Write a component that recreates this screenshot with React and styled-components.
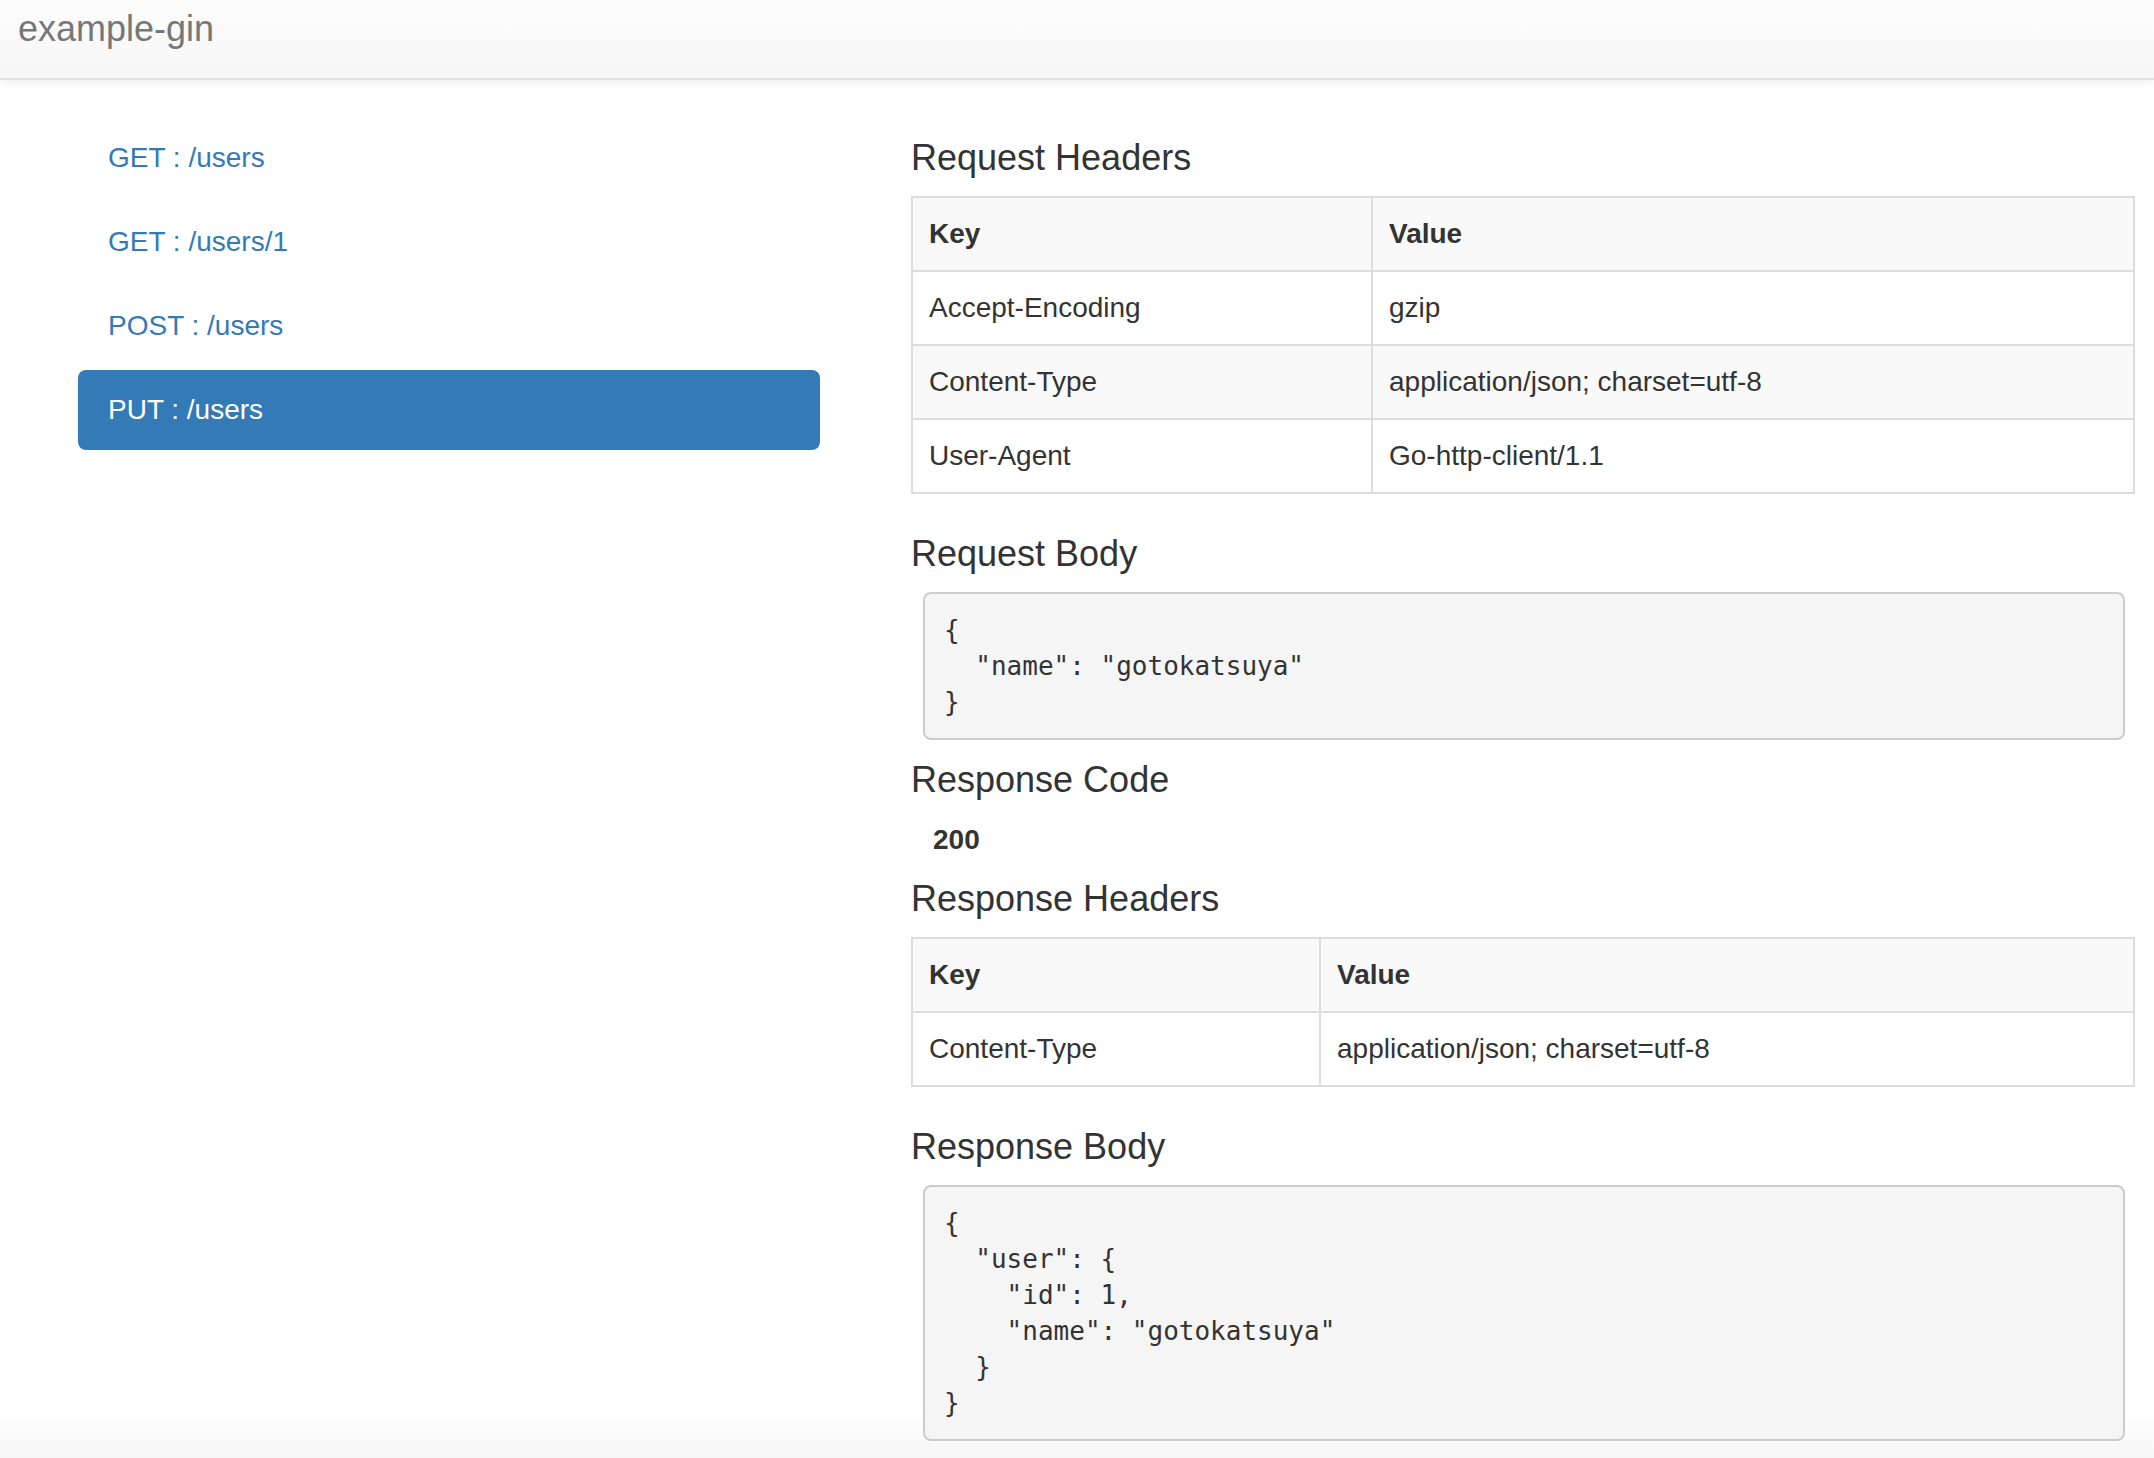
import styled, { createGlobalStyle } from "styled-components";

const endpoints = [
  { id: 1, method: "GET", path: "/users" },
  { id: 2, method: "GET", path: "/users/1" },
  { id: 3, method: "POST", path: "/users" },
  { id: 4, method: "PUT", path: "/users", active: true },
];

const requestHeaders = [
  ["Accept-Encoding", "gzip"],
  ["Content-Type", "application/json; charset=utf-8"],
  ["User-Agent", "Go-http-client/1.1"],
];

const responseHeaders = [["Content-Type", "application/json; charset=utf-8"]];

const requestBody = `{
  "name": "gotokatsuya"
}`;

const responseBody = `{
  "user": {
    "id": 1,
    "name": "gotokatsuya"
  }
}`;

const HeaderTable = ({ rows, keyWidth }) => (
  <Table>
    <tbody>
      <Row>
        <HeadCell $width={keyWidth}>Key</HeadCell>
        <HeadCell>Value</HeadCell>
      </Row>
      {rows.map(([key, value]) => (
        <Row key={key}>
          <Cell>{key}</Cell>
          <Cell>{value}</Cell>
        </Row>
      ))}
    </tbody>
  </Table>
);

const App = () => {
  return (
    <Page>
      <GlobalStyle />
      <Navbar>
        <Brand href="#">example-gin</Brand>
      </Navbar>
      <Main>
        <Sidebar>
          {endpoints.map((item) => (
            <PillLink key={item.id} href="#" $active={item.active}>
              {item.method} : {item.path}
            </PillLink>
          ))}
        </Sidebar>
        <Content>
          <Title>Request Headers</Title>
          <HeaderTable rows={requestHeaders} keyWidth={460} />
          <Title>Request Body</Title>
          <Code>{requestBody}</Code>
          <Title>Response Code</Title>
          <StatusCode>200</StatusCode>
          <Title>Response Headers</Title>
          <HeaderTable rows={responseHeaders} keyWidth={408} />
          <Title>Response Body</Title>
          <Code>{responseBody}</Code>
        </Content>
      </Main>
    </Page>
  );
};

export default App;

const GlobalStyle = createGlobalStyle`
  * {
    box-sizing: border-box;
  }

  html,
  body {
    margin: 0;
    padding: 0;
  }

  body {
    font-family: "Liberation Sans", Arial, sans-serif;
    font-size: 28px;
    line-height: 40px;
    color: #333;
    background: #fff;
  }
`;

const Page = styled.div`
  min-height: 1458px;
  background: linear-gradient(
    to bottom,
    #fff 0,
    #fff calc(100% - 52px),
    #f6f6f6 100%
  );
`;

const Navbar = styled.header`
  height: 80px;
  padding: 9px 18px 0;
  background: linear-gradient(to bottom, #fcfcfc 0, #f7f7f7 100%);
  border-bottom: 2px solid #e2e2e2;
  box-shadow: 0 2px 10px rgba(0, 0, 0, 0.075);
`;

const Brand = styled.a`
  display: inline-block;
  font-size: 36px;
  line-height: 40px;
  color: #777;
  text-decoration: none;
`;

const Main = styled.main`
  display: flex;
  align-items: flex-start;
  padding-top: 38px;
`;

const Sidebar = styled.nav`
  display: flex;
  flex-direction: column;
  gap: 4px;
  width: 742px;
  margin-left: 78px;
`;

const PillLink = styled.a`
  display: block;
  padding: 20px 30px;
  border-radius: 8px;
  font-size: 28px;
  line-height: 40px;
  text-decoration: none;
  color: ${(p) => (p.$active ? "#fff" : "#337ab7")};
  background: ${(p) => (p.$active ? "#337ab7" : "transparent")};
`;

const Content = styled.section`
  display: flex;
  flex-direction: column;
  width: 1224px;
  margin-left: 91px;
  padding-top: 20px;
`;

const Title = styled.h3`
  margin: 0 0 18px;
  font-size: 36px;
  line-height: 40px;
  font-weight: 500;
  color: #333;
`;

const Table = styled.table`
  width: 100%;
  margin-bottom: 40px;
  border-collapse: collapse;
  table-layout: fixed;
  border: 2px solid #ddd;
`;

const Row = styled.tr`
  &:nth-of-type(odd) {
    background: #f9f9f9;
  }
`;

const Cell = styled.td`
  padding: 16px;
  line-height: 40px;
  border: 2px solid #ddd;
  text-align: left;
  vertical-align: top;
`;

const HeadCell = styled(Cell).attrs({ as: "th" })`
  font-weight: bold;
  width: ${(p) => (p.$width ? `${p.$width}px` : "auto")};
`;

const Code = styled.pre`
  margin: 0 10px 20px 12px;
  padding: 18px 19px;
  font-family: "DejaVu Sans Mono", Menlo, monospace;
  font-size: 26px;
  line-height: 36px;
  color: #333;
  background: #f5f5f5;
  border: 2px solid #ccc;
  border-radius: 8px;
  white-space: pre;
`;

const StatusCode = styled.div`
  margin: 2px 0 19px 22px;
  font-size: 28px;
  line-height: 40px;
  font-weight: bold;
`;
